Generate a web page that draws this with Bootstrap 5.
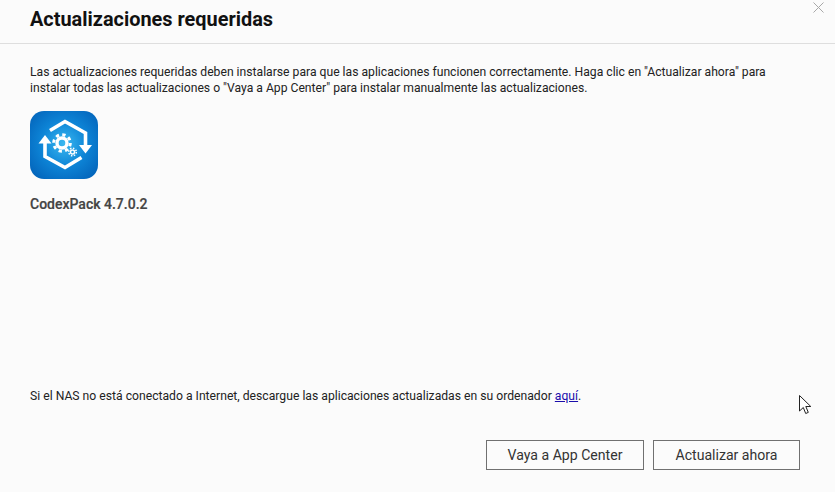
<!DOCTYPE html>
<html lang="es">
<head>
<meta charset="utf-8">
<title>Actualizaciones requeridas</title>
<link href="https://cdn.jsdelivr.net/npm/bootstrap@5.3.0/dist/css/bootstrap.min.css" rel="stylesheet">
<style>
html,body{height:492px;overflow:hidden}
body{background:#fbfbfb;font-family:Roboto,"Liberation Sans",sans-serif;color:#222;font-size:12px}
.dlg{height:492px;position:relative}
.dlg-head{height:44px;border-bottom:1px solid #dedede;padding:9px 30px 0}
.dlg-title{font-size:19.9px;line-height:22px;font-weight:700;color:#111;margin:0}
.dlg-close{position:absolute;top:1px;right:10px;width:13px;height:13px}
.dlg-body{padding:20px 30px 0}
.dlg-text{line-height:16px;margin:0 0 15px;font-size:12.17px}
.app-icon{width:68px;height:68px;display:block}
.app-name{font-size:14px;font-weight:500;color:#444;line-height:18px;margin-top:16px;-webkit-text-stroke:.2px #444}
.dlg-note{padding:0 30px;line-height:16px;margin-top:175px;font-size:12.18px}
.dlg-note a{color:#1a0dab}
.dlg-foot{padding:36px 35px 0 0;gap:9px}
.act-btn{height:30px;border:1px solid #707070;border-radius:0;background:#fbfbfb;color:#333;font-size:14.1px;line-height:18px;padding:0;font-family:inherit}
.act-a{width:158px}
.act-b{width:147px}
.cursor-arrow{position:absolute;left:799px;top:395px;width:13px;height:20px}
</style>
</head>
<body>
<div class="dlg d-flex flex-column">
  <div class="dlg-head">
    <h1 class="dlg-title">Actualizaciones requeridas</h1>
  </div>
  <svg class="dlg-close" viewBox="0 0 13 13" aria-label="Cerrar"><path d="M1.5 1.5l10 10M11.5 1.5l-10 10" stroke="#a8a8a8" stroke-width="1" fill="none"/></svg>
  <div class="dlg-body">
    <p class="dlg-text">Las actualizaciones requeridas deben instalarse para que las aplicaciones funcionen correctamente. Haga clic en "Actualizar ahora" para<br>instalar todas las actualizaciones o "Vaya a App Center" para instalar manualmente las actualizaciones.</p>
    <svg class="app-icon" viewBox="0 0 68 68">
      <defs>
        <radialGradient id="ig" cx="50%" cy="48%" r="62%">
          <stop offset="0" stop-color="#3ab8f0"/>
          <stop offset=".55" stop-color="#0d84d6"/>
          <stop offset="1" stop-color="#0467bd"/>
        </radialGradient>
      </defs>
      <rect width="68" height="68" rx="14" fill="url(#ig)"/>
      <path d="M20 19.500L35 10.500l20.500 11.500V35" fill="none" stroke="#fff" stroke-width="3.600"/>
      <path d="M49 34h13L55.500 42.500z" fill="#fff"/>
      <path d="M51.500 46.500L35 56.500L15 45.500V31" fill="none" stroke="#fff" stroke-width="3.600"/>
      <path d="M8.500 32.500h13L15 24z" fill="#fff"/>
      <g fill="none" stroke="#fff">
        <circle cx="32" cy="32" r="5" stroke-width="3.400"/>
        <circle cx="32" cy="32" r="8.300" stroke-width="3" stroke-dasharray="3.300 3.220"/>
        <circle cx="42.500" cy="41" r="2" stroke-width="1.500"/>
        <circle cx="42.500" cy="41" r="3.800" stroke-width="1.500" stroke-dasharray="1.500 1.480"/>
      </g>
    </svg>
    <div class="app-name">CodexPack 4.7.0.2</div>
  </div>
  <div class="dlg-note">Si el NAS no está conectado a Internet, descargue las aplicaciones actualizadas en su ordenador <a href="#">aquí</a>.</div>
  <div class="dlg-foot d-flex justify-content-end">
    <button type="button" class="btn act-btn act-a">Vaya a App Center</button>
    <button type="button" class="btn act-btn act-b">Actualizar ahora</button>
  </div>
  <svg class="cursor-arrow" viewBox="0 0 13 20"><path d="M.5.500v15.500l3.800-3.500 2.400 6 2.600-1.100-2.500-5.900h5z" fill="#fff" stroke="#222" stroke-width="1"/></svg>
</div>
</body>
</html>
